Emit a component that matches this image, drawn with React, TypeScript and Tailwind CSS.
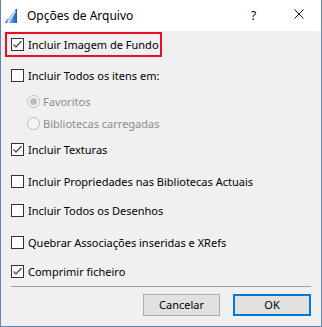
import React from "react";

const Check = ({ checked }: { checked?: boolean }) => (
  <span className="relative inline-block w-[13px] h-[13px] border border-[#333333] bg-white shrink-0">
    {checked && (
      <svg className="absolute left-0 top-0" width="11" height="11" viewBox="0 0 11 11">
        <path d="M1.5 5.5 L4 8 L9.5 2" fill="none" stroke="#555555" strokeWidth="1.4" />
      </svg>
    )}
  </span>
);

const Radio = ({ checked }: { checked?: boolean }) => (
  <span className="relative inline-flex items-center justify-center w-[13px] h-[13px] rounded-full border border-[#bcbcbc] bg-[#f4f4f4] shrink-0">
    {checked && <span className="w-[7px] h-[7px] rounded-full bg-[#bcbcbc]" />}
  </span>
);

const Row = ({ checked, label, className = "" }: { checked?: boolean; label: string; className?: string }) => (
  <div className={`flex items-center h-[13px] pl-[10px] whitespace-nowrap ${className}`}>
    <Check checked={checked} />
    <span className="ml-[4px] leading-none">{label}</span>
  </div>
);

const RRow = ({ checked, label, className = "" }: { checked?: boolean; label: string; className?: string }) => (
  <div className={`flex items-center h-[13px] pl-[26px] text-[#8c8c8c] whitespace-nowrap ${className}`}>
    <Radio checked={checked} />
    <span className="ml-[3px] leading-none">{label}</span>
  </div>
);

export default function App() {
  return (
    <div
      className="w-[322px] h-[327px] bg-[#f0f0f0] border-x border-b border-[#5f87b3] flex flex-col text-[11px] text-black"
      style={{ fontFamily: '"Noto Sans", "Open Sans", sans-serif' }}
    >
      <div className="h-[31px] bg-white flex items-center shrink-0 relative text-[12px]">
        <svg className="ml-[4px]" width="12" height="14" viewBox="0 0 12 14">
          <defs>
            <linearGradient id="lg" x1="0" y1="0" x2="1" y2="0">
              <stop offset="0" stopColor="#cfe3f7" />
              <stop offset="0.55" stopColor="#5d9be0" />
              <stop offset="1" stopColor="#1659bd" />
            </linearGradient>
          </defs>
          <polygon points="0,14 11,0 12,0 12,14" fill="url(#lg)" />
          <path d="M3 14 L10.5 2" stroke="#ffffff" strokeWidth="1.2" />
          <polygon points="0,14 3,9 2,14" fill="#2d6fc6" />
        </svg>
        <span className="ml-[10px]">Opções de Arquivo</span>
        <span className="absolute left-[250px] top-[7px]">?</span>
        <svg className="absolute left-[293px] top-[9px]" width="10" height="10" viewBox="0 0 10 10">
          <path d="M0.5 0.5 L9.5 9.5 M9.5 0.5 L0.5 9.5" stroke="#111" strokeWidth="1" />
        </svg>
      </div>

      <div className="mt-[1px] ml-[4px] w-[157px] h-[25px] border-2 border-[#e81123] flex items-center">
        <div className="flex items-center h-[13px] pl-[4px] whitespace-nowrap">
          <Check checked />
          <span className="ml-[4px] leading-none">Incluir Imagem de Fundo</span>
        </div>
      </div>

      <Row label="Incluir Todos os itens em:" className="mt-[12px]" />
      <RRow checked label="Favoritos" className="mt-[13px]" />
      <RRow label="Bibliotecas carregadas" className="mt-[9px]" />
      <Row checked label="Incluir Texturas" className="mt-[13px]" />
      <Row label="Incluir Propriedades nas Bibliotecas Actuais" className="mt-[19px]" />
      <Row label="Incluir Todos os Desenhos" className="mt-[16px]" />
      <Row label="Quebrar Associações inseridas e XRefs" className="mt-[19px]" />
      <Row checked label="Comprimir ficheiro" className="mt-[16px]" />

      <div className="mt-[8px] mx-[10px] h-px bg-[#a0a0a0]" />

      <div className="mt-[7px] flex justify-end gap-[13px] pr-[10px]">
        <button className="w-[77px] h-[22px] bg-[#e1e1e1] border border-[#adadad] flex items-center justify-center">
          Cancelar
        </button>
        <button className="w-[78px] h-[22px] bg-[#e1e1e1] border-2 border-[#0078d7] flex items-center justify-center">
          OK
        </button>
      </div>
    </div>
  );
}
